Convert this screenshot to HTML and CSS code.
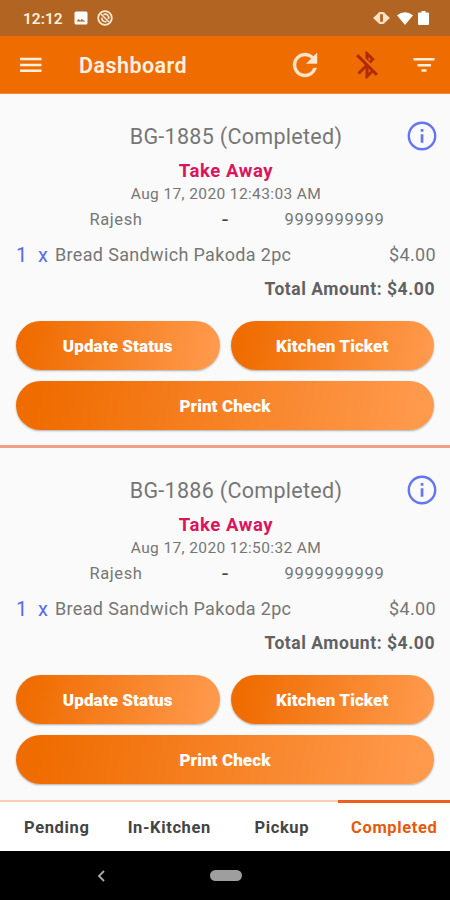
FILE: index.html
```html
<!DOCTYPE html>
<html lang="en">
<head>
<meta charset="utf-8">
<title>Dashboard</title>
<link rel="stylesheet" href="styles.css">
</head>
<body>
<div class="status">
  <span class="clock">12:12</span>
  <svg class="st-image" width="14" height="14" viewBox="0 0 14 14"><rect x=".5" y=".5" width="13" height="13" rx="1.5" fill="#fff"/><path d="M2.500 10.500l2-2.500 1.800 1.500 1.500-1.500 3.700 2.500z" fill="#b26522"/></svg>
  <svg class="st-sync" width="16" height="16" viewBox="0 0 16 16" fill="none" stroke="#ffe9d2"><circle cx="8" cy="8" r="6.800" stroke-width="1.800"/><path d="M4 4l8 8M5 7.500a3.400 3.400 0 0 0 4.500 4M6.500 4.600A3.600 3.600 0 0 1 11.500 9" stroke-width="1.600"/></svg>
  <span class="space"></span>
  <svg class="st-vibrate" width="17" height="12" viewBox="0 0 17 12"><path d="M0 6l5-4.500v9zM17 6l-5-4.500v9z" fill="#ffe3c8"/><rect x="6" y="1.200" width="5" height="9.600" rx="1" fill="#b26522" stroke="#ffe3c8" stroke-width="2.200"/></svg>
  <svg class="st-wifi" width="16" height="13" viewBox="0 0 16 13"><path d="M0 3.200Q8-2.800 16 3.200L8 13z" fill="#fff"/></svg>
  <svg width="11" height="14" viewBox="0 0 11 14"><path d="M3.500 0h4v1.500H10a1 1 0 0 1 1 1V13a1 1 0 0 1-1 1H1a1 1 0 0 1-1-1V2.500a1 1 0 0 1 1-1h2.500z" fill="#fff"/></svg>
</div>
<header class="appbar">
  <svg width="22" height="16" viewBox="0 0 22 16" fill="#fff0dc"><path d="M0 .8h21.500v2.500H0zM0 6.700h21.500v2.500H0zM0 12.600h21.500v2.500H0z"/></svg>
  <h1>Dashboard</h1>
  <span class="space"></span>
  <svg class="refresh" width="36" height="36" viewBox="0 0 24 24" fill="#ffe6cc" stroke="#ffe6cc" stroke-width=".3"><path d="M17.650 6.350A7.960 7.960 0 0 0 12 4a8 8 0 1 0 7.730 10h-2.080A6 6 0 1 1 12 6c1.660 0 3.140.69 4.220 1.780L13 11h7V4z"/></svg>
  <svg class="bluetooth" width="32" height="32" viewBox="0 0 24 24" fill="#b02c08" stroke="#b02c08" stroke-width=".3"><path d="M13 5.830l1.880 1.880-1.600 1.600 1.410 1.410 3.020-3.020L12 2h-1v5.030l2 2zM5.410 4 4 5.410 10.590 12 5 17.590 6.410 19 11 14.410V22h1l4.290-4.290 2.300 2.290L20 18.590zM13 18.170v-3.760l1.880 1.880z"/></svg>
  <svg width="22" height="16" viewBox="0 0 22 16" fill="#ffefdc"><path d="M.5 1h21v2.500h-21zM4.500 7h13.500v2.400H4.500zM8.500 12.300h5v2.500h-5z"/></svg>
</header>
<main>
  <section class="order">
    <div class="title"><h2>BG-1885 (Completed)</h2>
      <svg class="info" width="30" height="30" viewBox="0 0 30 30"><circle cx="15" cy="15" r="13.200" fill="none" stroke="#6475f2" stroke-width="2.400"/><path d="M13.700 8h2.700v2.700h-2.700zM13.700 13.200h2.700v8.500h-2.700z" fill="#6475f2"/></svg>
    </div>
    <div class="kind">Take Away</div>
    <div class="date">Aug 17, 2020 12:43:03 AM</div>
    <div class="customer"><span class="name">Rajesh</span><span class="dash">-</span><span class="phone">9999999999</span></div>
    <div class="item"><span class="qty">1</span><span class="times">x</span><span class="product">Bread Sandwich Pakoda 2pc</span><span class="price">$4.00</span></div>
    <div class="total">Total Amount: $4.00</div>
    <div class="actions"><button>Update Status</button><button>Kitchen Ticket</button><button class="wide">Print Check</button></div>
  </section>
  <section class="order">
    <div class="title"><h2>BG-1886 (Completed)</h2>
      <svg class="info" width="30" height="30" viewBox="0 0 30 30"><circle cx="15" cy="15" r="13.200" fill="none" stroke="#6475f2" stroke-width="2.400"/><path d="M13.700 8h2.700v2.700h-2.700zM13.700 13.200h2.700v8.500h-2.700z" fill="#6475f2"/></svg>
    </div>
    <div class="kind">Take Away</div>
    <div class="date">Aug 17, 2020 12:50:32 AM</div>
    <div class="customer"><span class="name">Rajesh</span><span class="dash">-</span><span class="phone">9999999999</span></div>
    <div class="item"><span class="qty">1</span><span class="times">x</span><span class="product">Bread Sandwich Pakoda 2pc</span><span class="price">$4.00</span></div>
    <div class="total">Total Amount: $4.00</div>
    <div class="actions"><button>Update Status</button><button>Kitchen Ticket</button><button class="wide">Print Check</button></div>
  </section>
</main>
<nav class="tabs"><a>Pending</a><a>In-Kitchen</a><a>Pickup</a><a class="active">Completed</a></nav>
<div class="sysnav">
  <svg width="8" height="12" viewBox="0 0 8 12" fill="none" stroke="#aaa" stroke-width="1.800"><path d="M7 1L2 6l5 5"/></svg>
  <span class="home"></span>
</div>
</body>
</html>
```
FILE: styles.css
```css
* { box-sizing: border-box; }
body {
  margin: 0;
  width: 450px;
  height: 900px;
  overflow: hidden;
  display: flex;
  flex-direction: column;
  background: #fafafa;
  font-family: Roboto, sans-serif;
  color: #767676;
  white-space: nowrap;
}
h1, h2 { margin: 0; }
svg { display: block; flex: none; }
.space { flex: 1; }
.status {
  flex: none;
  height: 36px;
  padding: 0 21px 0 23px;
  display: flex;
  align-items: center;
  background: #b26522;
}
.clock { width: 51px; color: #fff0df; font-size: 15.5px; font-weight: 600; padding-top: 2px; }
.st-sync { margin-left: 9px; }
.st-vibrate { margin-right: 7px; }
.st-wifi { margin-right: 5px; }
.appbar {
  flex: none;
  height: 58px;
  padding: 0 15px 0 20px;
  display: flex;
  align-items: center;
  background: #ef6c00;
  border-bottom: 1px solid #f3883a;
}
h1 { margin-left: 37px; padding-top: 1px; font-size: 21.5px; font-weight: 600; letter-spacing: .45px; color: #fff2e4; }
.refresh { margin-right: 28px; }
.bluetooth { margin-right: 30px; }
main { flex: 1; min-height: 0; overflow: hidden; }
.order { height: 354px; padding: 22px 14px 0 16px; border-bottom: 3px solid #f2a083; }
.order:last-child { border-bottom: 0; }
.title { height: 40px; display: flex; align-items: center; justify-content: flex-end; }
h2 { flex: 1; padding-left: 49px; text-align: center; font-size: 21.5px; font-weight: 400; letter-spacing: .3px; }
.info { margin-right: -1px; }
.kind { height: 30px; line-height: 30px; text-align: center; font-size: 18.5px; font-weight: 700; letter-spacing: .6px; color: #dc145d; }
.date { height: 16px; line-height: 16px; text-align: center; font-size: 15.5px; letter-spacing: .38px; }
.customer { height: 35px; display: grid; grid-template-columns: 200px 18px 200px; align-items: center; text-align: center; font-size: 16.5px; letter-spacing: .6px; }
.phone { letter-spacing: .72px; padding-left: 1px; }
.dash { color: #444; font-size: 22px; letter-spacing: 0; line-height: 20px; }
.item { height: 35px; display: flex; align-items: center; font-size: 18px; letter-spacing: .34px; }
.qty, .times { color: #5969ee; font-size: 20px; letter-spacing: 0; width: 22px; }
.times { width: 17px; }
.product { flex: 1; }
.total { height: 33px; line-height: 35px; text-align: right; font-size: 17.5px; font-weight: 700; letter-spacing: .55px; color: #616161; padding-right: 1px; }
.actions { margin-top: 16px; width: 418px; display: grid; grid-template-columns: 1fr 1fr; gap: 11px; }
button {
  height: 49px;
  border: 0;
  padding: 0;
  border-radius: 25px;
  background: linear-gradient(100deg, #ef6c00 6%, #ff9a4d 97%);
  box-shadow: 0 1px 2px rgba(0,0,0,.3);
  color: #fff;
  font: 900 17px Roboto, sans-serif;
  letter-spacing: .1px;
}
.wide { grid-column: span 2; }
.tabs { flex: none; height: 51px; display: grid; grid-template-columns: repeat(4, 1fr); background: #fff; }
.tabs a { border-top: 2px solid #ffcbb5; padding: 1px 0 0 1px; display: flex; align-items: center; justify-content: center; font-size: 16.5px; font-weight: 700; letter-spacing: .62px; color: #444; }
.tabs .active { border-top: 3px solid #ed5f20; color: #e8590c; padding-top: 0; }
.sysnav { flex: none; height: 49px; padding-left: 97px; display: flex; align-items: center; background: #000; }
.home { width: 32px; height: 11px; margin-left: 105px; border-radius: 6px; background: #9e9e9e; }
```
